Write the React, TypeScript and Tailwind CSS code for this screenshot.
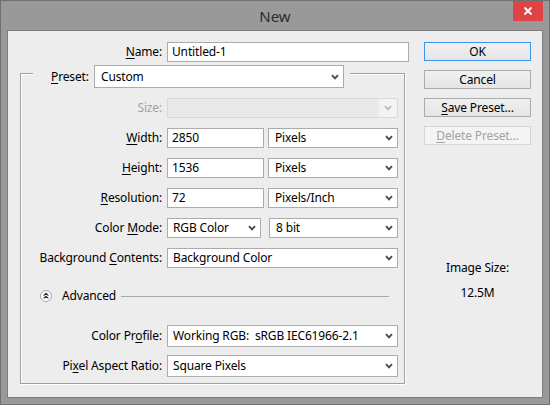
import React from 'react';

function Chevron({ disabled }: { disabled?: boolean }) {
  return (
    <svg width="8" height="6" viewBox="0 0 8 6" className="shrink-0">
      <path
        d="M1 1.2 L4 4.4 L7 1.2"
        fill="none"
        stroke={disabled ? '#bdbdbd' : '#4a4a4a'}
        strokeWidth="1.9"
      />
    </svg>
  );
}

function Key({ children }: { children: React.ReactNode }) {
  return <span className="underline underline-offset-[2px] decoration-1">{children}</span>;
}

function Select({ value, className }: { value: string; className: string }) {
  return (
    <div className={`flex items-center justify-between border border-[#acacac] bg-white pl-[5px] pr-[4px] ${className}`}>
      <span className="whitespace-pre">{value}</span>
      <Chevron />
    </div>
  );
}

function Field({ value, className }: { value: string; className: string }) {
  return (
    <div className={`flex items-center border border-[#acacac] bg-white pl-[4px] ${className}`}>
      <span className="whitespace-nowrap">{value}</span>
    </div>
  );
}

function Row({ label, children, className }: { label: React.ReactNode; children: React.ReactNode; className: string }) {
  return (
    <div className={`flex items-center ${className}`}>
      <div className="w-[141px] text-right whitespace-nowrap">{label}</div>
      <div className="ml-[5px] flex items-center">{children}</div>
    </div>
  );
}

function Button({ children, primary, disabled }: { children: React.ReactNode; primary?: boolean; disabled?: boolean }) {
  return (
    <div
      className={`h-[19px] w-[107px] flex items-center justify-center border bg-gradient-to-b ${
        disabled
          ? 'border-[#d5d5d5] from-[#f4f4f4] to-[#f4f4f4] text-[#a3a3a3]'
          : primary
          ? 'border-[#3c97ec] from-[#f0f0f0] to-[#e5e5e5]'
          : 'border-[#acacac] from-[#f0f0f0] to-[#e5e5e5]'
      }`}
    >
      {children}
    </div>
  );
}

export default function App() {
  return (
    <div className="w-[550px] h-[405px] flex flex-col bg-[#999999] border border-[#707070] font-['Noto_Sans','Liberation_Sans',sans-serif] text-[12px] leading-[16px] tracking-[-0.15px] text-black select-none">
      {/* title bar */}
      <div className="h-[29px] shrink-0 grid grid-cols-[1fr_auto_1fr]">
        <div />
        <div className="self-center text-[15px] leading-[18px] tracking-normal text-[#2b2b2b] pt-[1px]">New</div>
        <div className="flex justify-end items-start">
          <div className="w-[30px] h-[20px] mr-[6px] bg-[#e04343] flex items-center justify-center">
            <svg width="10" height="10" viewBox="0 0 10 10">
              <path d="M1.5 1.5 L8.5 8.5 M8.5 1.5 L1.5 8.5" stroke="#fff" strokeWidth="1.8" />
            </svg>
          </div>
        </div>
      </div>

      {/* client area */}
      <div className="flex-1 mx-[6px] mb-[6px] border border-[#7d7d7d] bg-[#ededed] flex pl-[12px] pt-[11px]">
        <div className="w-[389px] flex flex-col">
          <div className="flex items-center h-[20px]">
            <div className="w-[142px] text-right">
              <Key>N</Key>ame:
            </div>
            <Field value="Untitled-1" className="ml-[5px] w-[242px] h-[20px] border-[#5ea0e4]" />
          </div>

          <div className="mt-[11px] w-[385px] flex flex-col pb-[6px] border border-[#a0a0a0] shadow-[inset_1px_1px_0_#ffffff,1px_1px_0_#ffffff]">
            <div className="-mt-[9px] ml-[12px] self-start flex items-center bg-[#ededed] pl-[18px] pr-[6px]">
              <div className="w-[43px]">
                <Key>P</Key>reset:
              </div>
              <Select value="Custom" className="w-[250px] h-[23px] pl-[6px]" />
            </div>

            <Row label={<span className="text-[#a3a3a3]">Size:</span>} className="mt-[10px] h-[20px]">
              <div className="w-[231px] h-[20px] flex border border-[#d9d9d9] bg-[#e9e9e9]">
                <div className="flex-1" />
                <div className="w-[18px] flex items-center justify-center bg-[#f3f3f3]">
                  <Chevron disabled />
                </div>
              </div>
            </Row>

            <Row label={<><Key>W</Key>idth:</>} className="mt-[10px] h-[20px]">
              <Field value="2850" className="w-[97px] h-[20px]" />
              <Select value="Pixels" className="ml-[4px] w-[130px] h-[20px] pl-[6px]" />
            </Row>

            <Row label={<><Key>H</Key>eight:</>} className="mt-[10px] h-[20px]">
              <Field value="1536" className="w-[97px] h-[20px]" />
              <Select value="Pixels" className="ml-[4px] w-[130px] h-[20px] pl-[6px]" />
            </Row>

            <Row label={<><Key>R</Key>esolution:</>} className="mt-[10px] h-[20px]">
              <Field value="72" className="w-[97px] h-[20px]" />
              <Select value="Pixels/Inch" className="ml-[4px] w-[130px] h-[20px] pl-[6px]" />
            </Row>

            <Row label={<>Color <Key>M</Key>ode:</>} className="mt-[10px] h-[20px]">
              <Select value="RGB Color" className="w-[94px] h-[20px]" />
              <Select value="8 bit" className="ml-[8px] w-[129px] h-[20px] pl-[6px]" />
            </Row>

            <Row label={<>Background <Key>C</Key>ontents:</>} className="mt-[10px] h-[20px]">
              <Select value="Background Color" className="w-[231px] h-[20px]" />
            </Row>

            <div className="mt-[18px] h-[20px] flex items-center pl-[19px] pr-[15px]">
              <svg width="12" height="12" viewBox="0 0 12 12" className="shrink-0">
                <circle cx="6" cy="6" r="5.5" fill="#ffffff" stroke="#a5a5a5" />
                <path d="M3.6 5.6 L6 3.4 L8.4 5.6 M3.6 8.4 L6 6.2 L8.4 8.4" fill="none" stroke="#333333" strokeWidth="1.2" />
              </svg>
              <span className="ml-[10px]">Advanced</span>
              <div className="flex-1 ml-[5px] h-[1px] bg-[#a9a9a9]" />
            </div>

            <Row label={<>Color Pr<Key>o</Key>file:</>} className="mt-[19px] h-[22px]">
              <Select value="Working RGB:  sRGB IEC61966-2.1" className="w-[231px] h-[22px]" />
            </Row>

            <Row label={<>Pi<Key>x</Key>el Aspect Ratio:</>} className="mt-[8px] h-[22px]">
              <Select value="Square Pixels" className="w-[231px] h-[22px]" />
            </Row>
          </div>
        </div>

        <div className="ml-[15px] w-[107px] flex flex-col">
          <Button primary>OK</Button>
          <div className="mt-[9px]">
            <Button>Cancel</Button>
          </div>
          <div className="mt-[9px]">
            <Button>
              <span>
                <Key>S</Key>ave Preset...
              </span>
            </Button>
          </div>
          <div className="mt-[9px]">
            <Button disabled>
              <span>
                <Key>D</Key>elete Preset...
              </span>
            </Button>
          </div>
          <div className="mt-[115px] flex flex-col items-center">
            <div>Image Size:</div>
            <div className="mt-[9px]">12.5M</div>
          </div>
        </div>
      </div>
    </div>
  );
}
